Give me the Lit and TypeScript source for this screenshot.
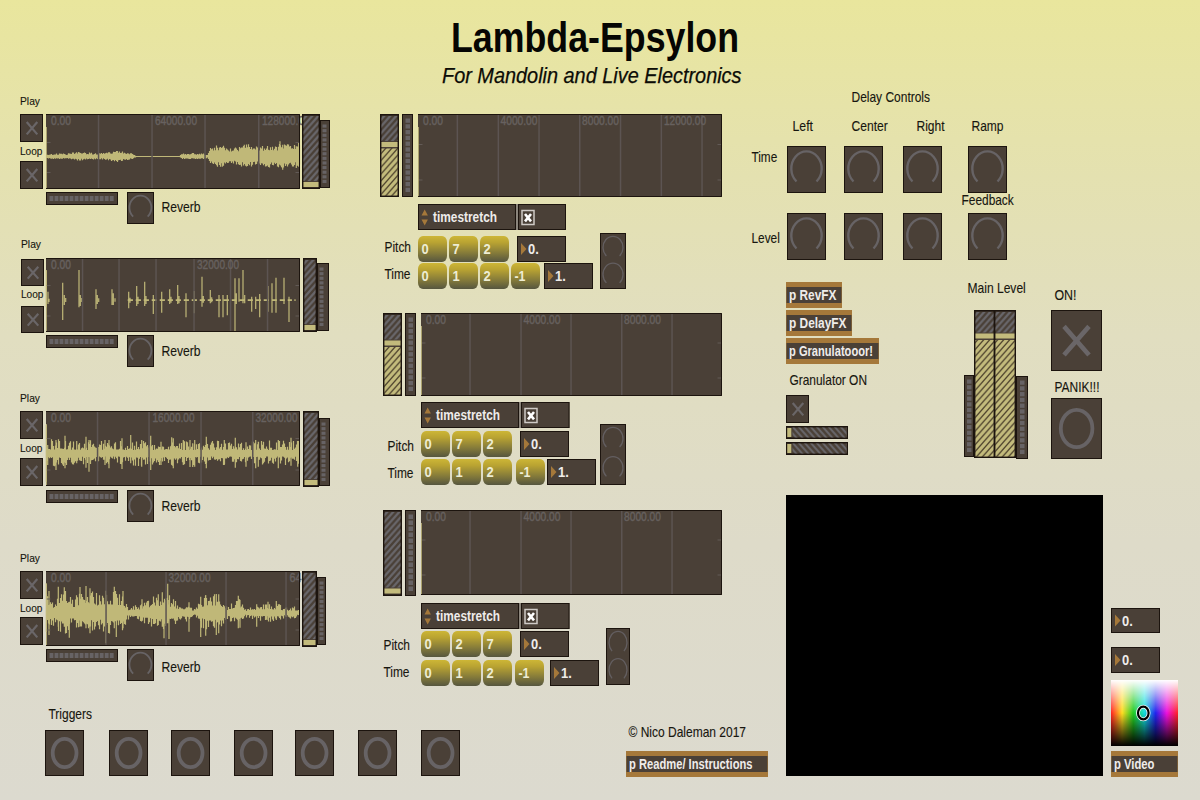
import { LitElement, html, svg, css, TemplateResult } from "lit";
import { customElement } from "lit/decorators.js";
import { styleMap } from "lit/directives/style-map.js";

/** A laid out piece of the patch: its bounds on the page and its markup. */
interface Item {
  x: number;
  y: number;
  w: number;
  h: number;
  t: unknown;
}

const px = (n: number) => `${Math.round(n * 100) / 100}px`;

function flow(dir: "row" | "col", items: Item[], origin?: { x: number; y: number }): Item {
  const x0 = origin ? origin.x : Math.min(...items.map((i) => i.x));
  const y0 = origin ? origin.y : Math.min(...items.map((i) => i.y));
  const x1 = Math.max(...items.map((i) => i.x + i.w));
  const y1 = Math.max(...items.map((i) => i.y + i.h));
  let cursor = dir === "row" ? x0 : y0;
  const cells = items.map((i) => {
    const lead = (dir === "row" ? i.x : i.y) - cursor;
    cursor = dir === "row" ? i.x + i.w : i.y + i.h;
    const cross = dir === "row" ? i.y - y0 : i.x - x0;
    const size = {
      width: px(i.w),
      height: px(i.h),
      marginLeft: px(dir === "row" ? lead : cross),
      marginTop: px(dir === "row" ? cross : lead),
    };
    return html`<div class="cell" style=${styleMap(size)}>${i.t}</div>`;
  });
  return { x: x0, y: y0, w: x1 - x0, h: y1 - y0, t: html`<div class=${dir}>${cells}</div>` };
}
const row = (...items: Item[]) => flow("row", items);
const col = (...items: Item[]) => flow("col", items);

const draw = (x: number, y: number, w: number, h: number, body: unknown): Item => ({
  x, y, w, h,
  t: html`<svg width=${w} height=${h} viewBox="0 0 ${w} ${h}">${body}</svg>`,
});

const words = (s: string, x: number, y: number, w: number, cls: string) =>
  svg`<text class=${cls} x=${x} y=${y} textLength=${w} lengthAdjust="spacingAndGlyphs">${s}</text>`;

const label = (s: string, x: number, base: number, w: number, cls = "lbl", h = 14): Item =>
  draw(x, base - h * 0.8, w, h, words(s, cls === "lbl" ? 0.5 : 0, h * 0.8, w, cls));

const panel = (w: number, h: number) => svg`
  <rect class="panel" width=${w} height=${h}></rect>
  <rect class="edge" x="0.5" y="0.5" width=${w - 1} height=${h - 1}></rect>`;

/* ---------- widgets ---------- */

const toggle = (x: number, y: number, w = 23, h = 28): Item => {
  const big = w > 30;
  const dx = w * (big ? 0.245 : 0.23);
  const dy = h * (big ? 0.235 : 0.22);
  const cx = w / 2 + (big ? 0 : 0.5);
  const cy = h / 2 + 0.2;
  return draw(x, y, w, h, svg`${panel(w, h)}
    <path class=${big ? "cross big" : "cross"} d="M${cx - dx} ${cy - dy}L${cx + dx} ${cy + dy}M${cx + dx} ${cy - dy}L${cx - dx} ${cy + dy}"></path>`);
};

const bang = (x: number, y: number, w: number, h: number, rx: number, ry: number): Item =>
  draw(x, y, w, h, svg`${panel(w, h)}
    <ellipse class="ring" cx=${w / 2 + 0.1} cy=${h / 2} rx=${rx} ry=${ry}></ellipse>`);

const arc = (cx: number, cy: number, rx: number, ry: number, cls: string) => {
  const ex = rx * 0.66;
  const ey = ry * 0.75;
  return svg`<path class=${cls} d="M${cx - ex} ${cy + ey}A${rx} ${ry} 0 1 1 ${cx + ex} ${cy + ey}"></path>`;
};

const dial = (x: number, y: number): Item =>
  draw(x, y, 39, 47, svg`${panel(39, 47)}${arc(19.5, 22.6, 15.2, 17.2, "arc")}`);

const smallDial = (x: number, y: number): Item =>
  draw(x, y, 27, 32, svg`${panel(27, 32)}${arc(13.4, 15.6, 11, 12, "arc thin")}`);

const dialPair = (x: number, y: number, w: number, h: number): Item =>
  draw(x, y, w, h, svg`${panel(w, h)}
    ${arc(w / 2, 14.6, w / 2 - 3, 11.3, "arc faint")}
    ${arc(w / 2, h / 2 + 13.4, w / 2 - 3, 11.3, "arc faint")}`);

const vSlider = (x: number, y: number, w: number, h: number, knob: number, kh = 5.5): Item =>
  draw(x, y, w, h, svg`
    <rect class="trim" width=${w} height=${h}></rect>
    <rect class="panel" x="1.5" y="1.5" width=${w - 3} height=${h - 3}></rect>
    <rect fill="url(#hatch)" x="1.5" y="2" width=${w - 3} height=${knob - 3}></rect>
    ${knob + kh < h - 4
      ? svg`<rect fill="url(#hatchOn)" x="1.5" y=${knob + kh + 1} width=${w - 3} height=${h - knob - kh - 2.5}></rect>`
      : null}
    <rect class="knob" x="1.5" y=${knob} width=${w - 3} height=${kh - 0.5}></rect>`);

const hSlider = (x: number, y: number): Item =>
  draw(x, y, 62, 13, svg`
    <rect class="trim" width="62" height="13"></rect>
    <rect class="panel" x="1" y="1.5" width="60" height="10"></rect>
    <rect fill="url(#hatchDown)" x="6.5" y="1.5" width="54" height="10"></rect>
    <rect class="knob" x="1.3" y="2" width="4" height="9"></rect>`);

const vMeter = (x: number, y: number, w: number, h: number, sx: number, sw: number): Item => {
  const pitch = (h - 8) / 13;
  return draw(x, y, w, h, svg`${panel(w, h)}
    ${Array.from({ length: 13 }, (_, i) =>
      svg`<rect class="seg" x=${sx} y=${4.5 + i * pitch} width=${sw} height=${pitch - 1.5}></rect>`)}`);
};

const hMeter = (x: number, y: number): Item =>
  draw(x, y, 72, 13, svg`${panel(72, 13)}
    ${Array.from({ length: 13 }, (_, i) =>
      svg`<rect class="seg" x=${3.5 + i * 5.02} y="4" width="3.9" height="5"></rect>`)}`);

const tri = (x: number, cy: number) =>
  svg`<path class="orange" d="M${x} ${cy - 6}L${x + 5.5} ${cy}L${x} ${cy + 6}Z"></path>`;

const numBox = (x: number, y: number, s: string, h = 26, w = 49): Item =>
  draw(x, y, w, h, svg`${panel(w, h)}${tri(4, h / 2)}${words(s, 11, h / 2 + 5, 10.8, "bold")}`);

const message = (x: number, y: number, s: string, w = 29): Item =>
  draw(x, y, w, 26, svg`
    <rect fill="url(#gold)" x="0" y="0" width=${w} height="26" rx="5" ry="6"></rect>
    ${words(s, 3.5, 17.8, s.length > 1 ? 11 : 7.2, "bold soft")}`);

const patcher = (x: number, y: number, w: number, s: string, tw: number): Item =>
  draw(x, y, w, 26, svg`
    <rect class="orange" width=${w} height="26"></rect>
    <rect class="panel" x="0.5" y="5" width=${w - 1} height="16"></rect>
    ${words(s, 3, 17.5, tw, "bold")}`);

const menu = (x: number, y: number, w: number): Item =>
  draw(x, y, w, 26, svg`${panel(98, 26)}
    <path class="orange" d="M3.5 11.5L6.7 5.5L9.9 11.5ZM3.5 15.5L6.7 21.5L9.9 15.5Z"></path>
    ${words("timestretch", 15, 18, 64, "bold")}
    <rect class="split" x="98" y="0" width="2" height="26"></rect>
    <g transform="translate(100 0)">${panel(w - 100, 26)}</g>
    <rect class="check" x="104" y="6.5" width="12" height="14"></rect>
    <path class="tick" d="M107 10L113 17.3M113 10L107 17.3"></path>`);

interface Wave {
  w: number;
  h: number;
  lines: number[];
  marks: [string, number, number][];
  ticks: [number, number];
  trace?: string;
}

const waveform = (x: number, y: number, v: Wave): Item =>
  draw(x, y, v.w, v.h, svg`
    <rect class="panel" width=${v.w} height=${v.h}></rect>
    ${v.trace ? svg`<path class="trace" d=${v.trace}></path>` : null}
    ${v.lines.map((l) => svg`<rect class="grid" x=${l - 0.7} y="1" width="1.5" height=${v.h - 2}></rect>`)}
    ${v.marks.map(([s, mx, mw]) => words(s, mx, v.h < 80 ? 11 : 10.7, mw, "mark"))}
    ${v.ticks.map((t) => svg`<path class="grid-tick" d="M0 ${t}h4.500M${v.w - 4.5} ${t}h4.500"></path>`)}
    <rect class="knob" x="0" y="13" width="0.8" height=${v.h - 14}></rect>
    <path class="edge" d="M0 0.5H${v.w - 0.5}V${v.h - 0.5}H0"></path>`);

/* ---------- audio traces ---------- */

const random = (seed: number) => () => {
  seed = (seed * 1103515245 + 12345) & 0x7fffffff;
  return ((seed >> 8) & 0xffff) / 0xffff;
};

const level = (points: number[][], x: number) => {
  for (let i = 1; i < points.length; i++) {
    if (x <= points[i][0]) {
      const [ax, ay] = points[i - 1];
      const [bx, by] = points[i];
      return ay + ((by - ay) * (x - ax)) / (bx - ax);
    }
  }
  return points[points.length - 1][1];
};

const envelope = (mid: number, points: number[][], floor: number, power: number, seed: number) => {
  const r = random(seed);
  let d = "";
  for (let x = 0; x < 254; x++) {
    const a = level(points, x);
    const up = a * (floor + (1 - floor) * Math.pow(r(), power));
    const down = a * 0.9 * (floor + (1 - floor) * Math.pow(r(), power));
    d += `M${x + 0.5} ${(mid - Math.max(0.5, up)).toFixed(1)}V${(mid + Math.max(0.5, down)).toFixed(1)}`;
  }
  return d;
};

/** Peaks are triples measured on a 3x grid whose left edge is 138. */
const peaks = (list: number[][], offset: number) =>
  list.map(([x, a, b]) => `M${((x - 138) / 3).toFixed(1)} ${((a - offset) / 3).toFixed(1)}V${((b - offset) / 3).toFixed(1)}`).join("");

const TRACE_1 = envelope(42.5,
  [[0, 2.5], [10, 3.2], [20, 3], [30, 5], [38, 4.5], [50, 3.2], [60, 4], [69, 6.5], [78, 5], [86, 3], [90, 0.6], [114, 0.5], [133, 0.6],
   [135, 3], [145, 3.6], [158, 3.2], [161, 2], [164, 9], [172, 12], [180, 10], [190, 9], [199, 13], [212, 9.5], [225, 13], [230, 10.5],
   [235, 16], [238, 14], [245, 11.5], [254, 14]], 0.5, 1, 7) +
  peaks([[650, 190, 242], [667, 195, 246], [733, 180, 238], [840, 170, 240], [848, 180, 255], [889, 185, 250], [896, 175, 246]], 88);

const TRACE_2 = peaks([
  [139, 120, 232], [144, 185, 222], [147, 206, 216], [188, 158, 270], [193, 195, 225], [197, 204, 216], [237, 120, 232], [241, 195, 228],
  [245, 204, 216], [288, 178, 237], [292, 195, 222], [296, 205, 216], [336, 178, 225], [340, 190, 225], [345, 205, 215], [386, 185, 235],
  [390, 203, 218], [410, 168, 228], [414, 200, 222], [434, 155, 228], [438, 198, 222], [460, 195, 252], [485, 185, 248], [509, 178, 222],
  [513, 200, 218], [533, 165, 222], [537, 198, 220], [558, 190, 262], [583, 183, 250], [606, 140, 230], [610, 198, 218], [631, 180, 220],
  [635, 202, 217], [657, 195, 262], [669, 195, 262], [682, 195, 256], [705, 145, 305], [709, 190, 222], [717, 145, 215], [729, 120, 220],
  [734, 195, 220], [755, 200, 245], [767, 200, 237], [779, 192, 262], [804, 168, 245], [816, 160, 248], [828, 143, 248], [852, 143, 222],
  [867, 200, 276],
], 84) + Array.from({ length: 170 }, (_, i) => 382 + i * 3)
  .filter((x) => x % 24 < 15 && x < 875)
  .map((x) => `M${(x - 138) / 3} 41.300V43`).join("") + "M249 41.300V43";

const TRACE_3 = envelope(42.5, [[0, 15], [30, 14], [60, 13], [90, 14], [120, 14], [160, 13], [200, 13], [254, 13]], 0.26, 2.1, 21) +
  peaks([[139, 120, 290], [143, 180, 240], [168, 165, 255], [195, 152, 250], [230, 168, 235], [258, 155, 248], [267, 165, 260],
    [315, 165, 240], [327, 165, 250], [366, 160, 252], [392, 150, 235], [425, 165, 245], [452, 152, 255], [483, 170, 240],
    [515, 157, 240], [520, 160, 250], [550, 165, 240], [570, 165, 246], [578, 175, 246], [584, 165, 245], [619, 155, 250],
    [673, 165, 240], [706, 158, 248], [738, 172, 245], [767, 165, 250], [775, 170, 245], [835, 165, 250], [873, 158, 242],
    [893, 168, 245]], 78);

const TRACE_4 = envelope(42,
  [[139, 66], [160, 42], [175, 70], [193, 76], [215, 42], [240, 72], [260, 76], [285, 60], [320, 66], [343, 74], [370, 56], [380, 22],
   [420, 30], [455, 50], [480, 58], [500, 62], [510, 50], [540, 28], [565, 34], [580, 10], [590, 22], [602, 50], [617, 58], [650, 58],
   [665, 48], [680, 22], [700, 42], [720, 42], [735, 14], [770, 26], [805, 30], [830, 30], [860, 16], [880, 22], [898, 12]]
    .map(([x, a]) => [(x - 138) / 3, a / 3]), 0.36, 1.8, 5) +
  peaks([[139, 115, 260], [147, 138, 270], [175, 125, 245], [193, 127, 245], [208, 170, 278], [240, 126, 245], [258, 123, 250],
    [270, 130, 265], [317, 137, 295], [343, 125, 250], [349, 170, 276], [369, 138, 250], [426, 163, 220], [475, 148, 240],
    [487, 142, 245], [492, 180, 280], [503, 116, 235], [507, 165, 282], [567, 172, 260], [602, 155, 276], [617, 150, 272],
    [649, 147, 270], [656, 148, 265], [715, 152, 250], [720, 165, 248], [770, 178, 245], [804, 170, 225], [829, 168, 225]], 78);

/* ---------- groups ---------- */

const player = (o: {
  top: number; tx: number; th: number; play: number; t1: number; loop: number; t2: number;
  wave: Wave; sx: number; sw: number; sh: number; mw: number; my: number; mh: number; low: number; rev: number; reverb: number;
}): Item => col(
  label("Play", o.tx, o.play, 20, "small", 11),
  row(
    col(toggle(o.tx, o.t1, 23, o.th), label("Loop", o.tx - 0.3, o.loop, 22.5, "small", 11), toggle(o.tx, o.t2, 23, o.th)),
    waveform(46, o.top, o.wave),
    vSlider(o.sx, o.top, o.sw, o.sh, o.sh - 7, 5.5),
    vMeter(o.sx + o.sw, o.my, o.mw, o.mh, 2.5, 4),
  ),
  row(hMeter(46, o.low), smallDial(127, o.rev), label("Reverb", 161, o.reverb, 39)),
);

const granulator = (o: {
  top: number; x: number; sh: number; knob: number; wave: Wave; mh: number; menu: number; menuW: number; lx: number;
  pitchBase: number; timeBase: number; pitch: string[]; py: number; ty: number; last: number; n1: number; n2: number;
  dials: [number, number, number, number];
}): Item => {
  const c = [o.x, o.x + 31, o.x + 62];
  return col(
    row(
      vSlider(o.x - 38, o.top, 19, o.sh, o.knob),
      vMeter(o.x - 16, o.top, 11, o.mh, 3.5, 4.5),
      waveform(o.x, o.top, o.wave),
    ),
    menu(o.x, o.menu, o.menuW),
    row(
      col(
        row(label("Pitch", o.lx, o.pitchBase, 26.5), ...o.pitch.map((p, i) => message(c[i], o.py, p)), numBox(o.n1, o.py, "0.")),
        row(label("Time", o.lx, o.timeBase, 26), ...["0", "1", "2"].map((p, i) => message(c[i], o.ty, p)),
          message(o.last, o.ty, "-1"), numBox(o.n2, o.ty, "1.")),
      ),
      dialPair(...o.dials),
    ),
  );
};

const HUES = ["#f22", "#fd2", "#2c2", "#1dd", "#22e", "#e1d", "#f22"];

const swatch = (x: number, y: number): Item => ({
  x, y, w: 67, h: 66,
  t: html`<svg width="67" height="66" viewBox="0 0 67 66">
    <defs>
      <linearGradient id="hue">${HUES.map((c, i) => svg`<stop offset=${i / 6} stop-color=${c}></stop>`)}</linearGradient>
      <linearGradient id="lum" x1="0" y1="0" x2="0" y2="1">
        <stop offset="0" stop-color="#fff"></stop>
        <stop offset="0.5" stop-color="#fff" stop-opacity="0"></stop>
        <stop offset="0.5" stop-color="#000" stop-opacity="0"></stop>
        <stop offset="1" stop-color="#000"></stop>
      </linearGradient>
    </defs>
    <rect width="67" height="66" fill="url(#hue)"></rect>
    <rect width="67" height="66" fill="url(#lum)"></rect>
    <ellipse class="halo" cx="32.300" cy="33" rx="5.300" ry="6.300"></ellipse>
    <ellipse class="pick" cx="32.300" cy="33" rx="5.300" ry="6.300"></ellipse>
  </svg>`,
});

const GRAN_2: Wave = {
  w: 301, h: 83, lines: [49, 100, 150, 200.7, 251],
  marks: [["0.00", 5, 20], ["4000.00", 102.5, 37], ["8000.00", 203, 37]], ticks: [30, 65],
};

@customElement("app-root")
export class AppRoot extends LitElement {
  static styles = css`
    :host {
      display: block;
      width: 1200px;
      height: 800px;
      overflow: hidden;
      background: linear-gradient(#e9e69d 0%, #e4e1b0 22%, #e1dec0 42%, #dedbc9 68%, #dcdacf 100%);
      font-family: "Liberation Sans", Arial, sans-serif;
    }
    .row { display: flex; flex-direction: row; align-items: flex-start; }
    .col { display: flex; flex-direction: column; align-items: flex-start; }
    .cell { flex: none; }
    svg { display: block; overflow: visible; }
    .defs { height: 0; width: 0; }
    text { font-family: "Liberation Sans", Arial, sans-serif; fill: #17160f; }
    .title { font-size: 42.300px; font-weight: 700; fill: #060603; }
    .subtitle { font-size: 22.500px; font-style: italic; fill: #0c0c06; stroke: #0c0c06; stroke-width: 0.250px; }
    .lbl { font-size: 14.200px; stroke: #17160f; stroke-width: 0.120px; }
    .small { font-size: 11.500px; stroke: #17160f; stroke-width: 0.120px; }
    .bold { font-size: 14.500px; font-weight: 700; fill: #efecea; }
    .soft { fill: #eeedd4; }
    .mark { font-size: 12px; fill: #67615f; stroke: #67615f; stroke-width: 0.400px; }
    .panel { fill: #4a4037; }
    .edge { fill: none; stroke: #1c140e; stroke-width: 1px; }
    .trim { fill: #1c140e; }
    .knob { fill: #c3bb7c; }
    .orange { fill: #a5783a; }
    .split { fill: #8b857c; }
    .seg { fill: #676365; }
    .grid { fill: #5c5452; }
    .grid-tick { stroke: #625a56; stroke-width: 1.200px; }
    .trace { fill: none; stroke: #c0b878; stroke-width: 1.200px; }
    .cross { fill: none; stroke: #6a6668; stroke-width: 2.200px; }
    .big { stroke-width: 4.600px; }
    .ring { fill: none; stroke: #676365; stroke-width: 3.800px; }
    .arc { fill: none; stroke: #676365; stroke-width: 2.400px; }
    .thin { stroke-width: 1.800px; }
    .faint { stroke-width: 1.300px; stroke: #635e60; }
    .check { fill: #4a4037; stroke: #cfcac6; stroke-width: 1.500px; }
    .tick { stroke: #fff; stroke-width: 2.600px; }
    .halo { fill: none; stroke: #fff; stroke-width: 3.800px; }
    .pick { fill: none; stroke: #000; stroke-width: 2.200px; }
    .screen { width: 100%; height: 100%; background: #000; }
  `;

  render(): TemplateResult {
    const players = [
      player({
        top: 114, tx: 20, th: 28, play: 104.5, t1: 114, loop: 155, t2: 161, sx: 302, sw: 18, sh: 75, mw: 10, my: 120, mh: 68,
        low: 192, rev: 192, reverb: 212.5,
        wave: { w: 254, h: 75, lines: [52.5, 106, 159, 212.7], marks: [["0.00", 5, 20], ["64000.00", 109, 42], ["128000.0", 216, 42]], ticks: [28.5, 58.5], trace: TRACE_1 },
      }),
      player({
        top: 258, tx: 21, th: 27, play: 248, t1: 259, loop: 298.3, t2: 306, sx: 303, sw: 14, sh: 74, mw: 12, my: 263, mh: 68,
        low: 335, rev: 335, reverb: 356,
        wave: { w: 254, h: 74, lines: [36.5, 73, 110, 148, 184.5, 221.5], marks: [["0.00", 5, 20], ["32000.00", 151, 42]], ticks: [27.5, 58], trace: TRACE_2 },
      }),
      player({
        top: 411, tx: 20, th: 28, play: 401.7, t1: 411, loop: 452.3, t2: 458, sx: 303, sw: 16, sh: 76, mw: 11, my: 418, mh: 68,
        low: 490, rev: 490, reverb: 511,
        wave: { w: 254, h: 75, lines: [51.5, 103, 155, 206.7], marks: [["0.00", 5, 20], ["16000.00", 106.5, 42], ["32000.00", 209.5, 42]], ticks: [27.5, 59], trace: TRACE_3 },
      }),
      player({
        top: 571, tx: 20, th: 28, play: 561.5, t1: 571, loop: 612.2, t2: 617, sx: 302, sw: 15, sh: 76, mw: 9, my: 577, mh: 68,
        low: 649, rev: 649, reverb: 672,
        wave: { w: 254, h: 75, lines: [60, 120, 180, 240], marks: [["0.00", 5, 20], ["32000.00", 122.5, 42], ["64", 243.5, 12]], ticks: [28, 59], trace: TRACE_4 },
      }),
    ];

    const left = col(
      ...players,
      label("Triggers", 48.5, 719, 43.5),
      row(...[45, 109, 171, 234, 295, 358, 421].map((x) => bang(x, 730, 39, 46, 11.9, 14.2))),
    );
    // Columns keep their own width; only the trigger strip runs on below the middle one.
    left.w = 320;

    const middle = col(
      granulator({
        top: 114, x: 418, sh: 83, knob: 28, mh: 83, menu: 204, menuW: 148, lx: 384, pitchBase: 252.5, timeBase: 279.5,
        pitch: ["0", "7", "2"], py: 236, ty: 263, last: 511, n1: 517, n2: 544, dials: [600, 233, 26, 56],
        wave: {
          w: 304, h: 83, lines: [39.3, 80.3, 121, 161.7, 202.5, 243.3, 284],
          marks: [["0.00", 5, 20], ["4000.00", 82.5, 37], ["8000.00", 164, 37], ["12000.00", 246, 42]], ticks: [30.5, 66],
        },
      }),
      granulator({
        top: 313, x: 421, sh: 83, knob: 27.5, mh: 83, menu: 402, menuW: 148.5, lx: 387, pitchBase: 451, timeBase: 478.5,
        pitch: ["0", "7", "2"], py: 431, ty: 459, last: 516, n1: 520, n2: 547, dials: [600, 424, 26, 61], wave: GRAN_2,
      }),
      granulator({
        top: 510, x: 421, sh: 86, knob: 78.5, mh: 86, menu: 603, menuW: 148.5, lx: 383, pitchBase: 650.5, timeBase: 677,
        pitch: ["0", "2", "7"], py: 631, ty: 660, last: 515, n1: 520, n2: 550, dials: [606, 628, 24, 57], wave: { ...GRAN_2, h: 85 },
      }),
      label("© Nico Daleman 2017", 628.5, 737.5, 117.5),
      patcher(626, 751, 142, "p Readme/ Instructions", 123.5),
    );

    const knobs = [787, 844, 903, 968];
    const right = col(
      label("Delay Controls", 850.7, 102, 78.5),
      row(label("Left", 792, 131.5, 20.5), label("Center", 851, 131.5, 36.3), label("Right", 915.7, 131.5, 28), label("Ramp", 971.5, 131.5, 32)),
      row(label("Time", 750.7, 162, 25.7), ...knobs.map((x) => dial(x, 146))),
      label("Feedback", 960.7, 205.5, 52.3),
      row(label("Level", 750.7, 243, 28.3), ...knobs.map((x) => dial(x, 213))),
      row(
        col(
          patcher(786, 282, 56, "p RevFX", 47.5),
          patcher(786, 310, 66, "p DelayFX", 57.5),
          patcher(786, 338, 93, "p Granulatooor!", 84),
          label("Granulator ON", 789.5, 385, 77.5),
          toggle(786, 395),
          hSlider(786, 426),
          hSlider(786, 442),
        ),
        col(
          label("Main Level", 967, 293.5, 58.3),
          row(
            vMeter(964, 375, 10, 82, 3, 4.5),
            vSlider(974, 310, 21, 148, 23.5, 5.5),
            vSlider(994, 310, 22, 148, 23.5, 5.5),
            vMeter(1016, 376, 12, 83, 4, 4.5),
          ),
        ),
        col(
          label("ON!", 1054.5, 300.5, 22),
          toggle(1051, 310, 51, 61),
          label("PANIK!!!", 1054.5, 392, 45),
          bang(1051, 398, 51, 61, 15.8, 18.6),
        ),
      ),
      row(
        { x: 786, y: 495, w: 317, h: 281, t: html`<div class="screen"></div>` },
        col(
          numBox(1111, 608, "0.", 25),
          numBox(1111, 647, "0."),
          swatch(1111, 680),
          patcher(1111, 751, 67, "p Video", 40.5),
        ),
      ),
    );

    const page = flow("col", [
      label("Lambda-Epsylon", 450.7, 51.3, 288, "title", 42),
      label("For Mandolin and Live Electronics", 441.5, 82.7, 299.5, "subtitle", 22),
      row(left, middle, right),
    ], { x: 0, y: 0 });

    return html`
      <svg class="defs">
        <defs>
          <pattern id="hatch" width="6" height="6.800" patternUnits="userSpaceOnUse">
            <path d="M-1 7.933L7 -1.133M-4 4.533L1 -1.133M5 7.933L10 2.267" stroke="#68666a" stroke-width="2.200"></path>
          </pattern>
          <pattern id="hatchOn" width="6" height="6.800" patternUnits="userSpaceOnUse">
            <rect width="6" height="6.800" fill="#c3bb7c"></rect>
            <path d="M-1 7.933L7 -1.133M-4 4.533L1 -1.133M5 7.933L10 2.267" stroke="#51462f" stroke-width="1.400"></path>
          </pattern>
          <pattern id="hatchDown" width="6" height="6.800" patternUnits="userSpaceOnUse">
            <path d="M-1 -1.133L7 7.933M-4 2.267L1 7.933M5 -1.133L10 4.533" stroke="#68666a" stroke-width="2"></path>
          </pattern>
          <linearGradient id="gold" x1="0" y1="0" x2="0" y2="1">
            <stop offset="0" stop-color="#cdb636"></stop>
            <stop offset="0.250" stop-color="#b9a332"></stop>
            <stop offset="0.650" stop-color="#857b3a"></stop>
            <stop offset="1" stop-color="#56563f"></stop>
          </linearGradient>
        </defs>
      </svg>
      <div class="page">${page.t}</div>
    `;
  }
}
